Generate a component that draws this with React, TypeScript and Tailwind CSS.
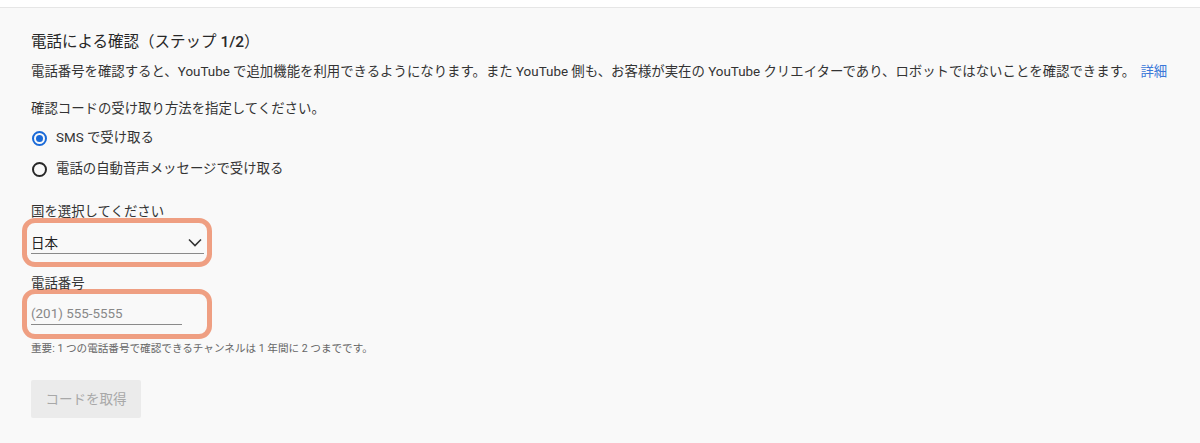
import React from "react";

const font = { fontFamily: 'Roboto, "Noto Sans CJK JP", sans-serif' };

export default function App() {
  return (
    <div
      className="w-[1200px] h-[443px] bg-[#f9f9f9] text-[#282828] overflow-hidden"
      style={font}
    >
      <div className="h-[8px] bg-white border-b border-[#e6e6e6]" />
      <div className="pl-[31px] pt-[22px]">
        <h1 className="text-[15.5px] leading-[24px] font-normal text-[#282828]">
          電話による確認（ステップ <span className="font-medium">1/2</span>）
        </h1>
        <p className="mt-[8px] text-[13.4px] leading-[20px] text-[#333]">
          電話番号を確認すると、YouTube で追加機能を利用できるようになります。また YouTube 側も、お客様が実在の YouTube クリエイターであり、ロボットではないことを確認できます。{" "}
          <span className="text-[#3b78d8] ml-[2px]">詳細</span>
        </p>
        <p className="mt-[17px] text-[13.4px] leading-[20px] text-[#333]">
          確認コードの受け取り方法を指定してください。
        </p>
        <div className="mt-[4px] flex flex-col">
          <div className="h-[31px] flex items-center gap-[9px]">
            <span className="ml-[1px] w-[15px] h-[15px] rounded-full border-2 border-[#1a6ad8] flex items-center justify-center">
              <span className="w-[7px] h-[7px] rounded-full bg-[#1a6ad8]" />
            </span>
            <span className="text-[13.4px] text-[#333]">SMS で受け取る</span>
          </div>
          <div className="h-[31px] flex items-center gap-[9px]">
            <span className="ml-[1px] w-[15px] h-[15px] rounded-full border-2 border-[#282828]" />
            <span className="text-[13.4px] text-[#333]">電話の自動音声メッセージで受け取る</span>
          </div>
        </div>
        <p className="mt-[18px] text-[13.4px] leading-[18px] text-[#333]">国を選択してください</p>
        <div className="ml-[-9px] mt-[-3px] w-[190px] h-[49px] border-[5px] border-[#ef9f82] rounded-[13px] pl-[4px] pr-[3px] pt-[9px]">
          <div className="h-[22px] border-b border-[#8a8a8a] flex items-center justify-between">
            <span className="text-[13.5px] text-[#222] leading-[20px]">日本</span>
            <svg width="14" height="9" viewBox="0 0 14 9" className="mr-[2px]">
              <path d="M1 1.5 L7 7.5 L13 1.5" fill="none" stroke="#333" strokeWidth="1.6" />
            </svg>
          </div>
        </div>
        <p className="mt-[8px] text-[13.4px] leading-[18px] text-[#333]">電話番号</p>
        <div className="ml-[-9px] mt-[-4px] w-[190px] h-[50px] border-[5px] border-[#ef9f82] rounded-[13px] pl-[4px] pt-[9px]">
          <div className="w-[151px] h-[22px] border-b border-[#8a8a8a] flex items-center">
            <span className="text-[13.4px] text-[#888] leading-[20px]">(201) 555-5555</span>
          </div>
        </div>
        <p className="mt-[2px] text-[10.6px] leading-[16px] text-[#666]">
          重要: 1 つの電話番号で確認できるチャンネルは 1 年間に 2 つまでです。
        </p>
        <button className="mt-[23px] w-[110px] h-[38px] bg-[#ebebeb] rounded-[2px] text-[13.5px] text-[#a8a8a8]">
          コードを取得
        </button>
      </div>
    </div>
  );
}
